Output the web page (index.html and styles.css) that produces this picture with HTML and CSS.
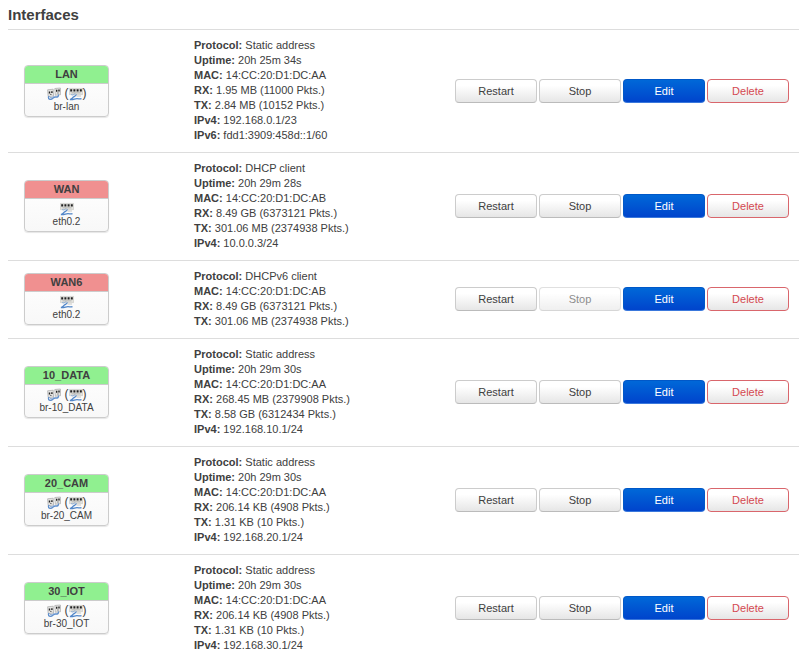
FILE: index.html
```
<!DOCTYPE html>
<html lang="en">
<head>
    <meta charset="UTF-8">
    <meta name="viewport" content="width=device-width, initial-scale=1.0">
    <title>Interfaces</title>
    <link rel="stylesheet" href="styles.css">
</head>
<body>
    <!-- shared icons -->
    <svg class="sprite" aria-hidden="true">
        <symbol id="bridge" viewBox="0 0 14 14">
            <path d="M.6 2.800l5.600-.6.4 6.800-5.400.7z" fill="#e4e4e2" stroke="#a9a9a9" stroke-width=".7"/>
            <path d="M7.800 1.500l5.600-.5.300 6.600-5.400.7z" fill="#e4e4e2" stroke="#a9a9a9" stroke-width=".7"/>
            <path d="M1.800 4.600h1.400v1.900H1.800zM4.200 4.300h1.400v1.800H4.200zM9 2.800h1.400v1.900H9zM11.300 2.500h1.400v1.900h-1.400z" fill="#222"/>
            <path d="M3 7h1.600v1H3zM10.200 5.500h1.500v1h-1.500z" fill="#777"/>
            <path d="M2 9C.8 11 1.800 12.800 4 12.200S6.500 9.800 8.500 10 12 9.500 11.300 7.500" fill="none" stroke="#5f8fcc" stroke-width="1.400"/>
            <path d="M3 10.500c1.500.4 2.800 0 4-1.200" fill="none" stroke="#8eaed8" stroke-width="1"/>
        </symbol>
        <symbol id="switch" viewBox="0 0 14 14">
            <path d="M.4 1.400h13.200v6.200H.4z" fill="#e2e2de" stroke="#bcbcb8" stroke-width=".5"/>
            <path d="M1.200 2.200h2v2.200h-2zM4.400 2.200h2v2.200h-2zM7.600 2.200h2v2.200h-2zM10.800 2.200h2v2.200h-2z" fill="#222"/>
            <path d="M2.500 5.400h9v.9h-9z" fill="#a8a8a4"/>
            <path d="M2.200 7.600c1.500.8 3.300-.2 3.800-1.200" fill="none" stroke="#86a9d6" stroke-width="1"/>
            <path d="M7.500 7.500C6.500 9.500 4.500 9.600 3.500 10.800S1.500 12.400 1 12.500c2.500.6 5-.8 7-.8s3 .4 4.500 0" fill="none" stroke="#5287c9" stroke-width="1.300"/>
            <path d="M7.500 9h4.500" stroke="#c8c8c4" stroke-width="1"/>
        </symbol>
    </svg>

    <h3>Interfaces</h3>

    <table class="interfaces">
        <tr>
            <td class="name">
                <div class="ifacebox">
                    <div class="head up">LAN</div>
                    <div class="body">
                        <div class="icons"><svg><use href="#bridge"/></svg> <span>(<svg><use href="#switch"/></svg>)</span></div>
                        br-lan
                    </div>
                </div>
            </td>
            <td class="info">
                <strong>Protocol:</strong> Static address<br>
                <strong>Uptime:</strong> 20h 25m 34s<br>
                <strong>MAC:</strong> 14:CC:20:D1:DC:AA<br>
                <strong>RX:</strong> 1.95 MB (11000 Pkts.)<br>
                <strong>TX:</strong> 2.84 MB (10152 Pkts.)<br>
                <strong>IPv4:</strong> 192.168.0.1/23<br>
                <strong>IPv6:</strong> fdd1:3909:458d::1/60
            </td>
            <td>
                <div class="actions">
                    <button type="button">Restart</button>
                    <button type="button">Stop</button>
                    <button type="button" class="edit">Edit</button>
                    <button type="button" class="delete">Delete</button>
                </div>
            </td>
        </tr>
        <tr>
            <td class="name">
                <div class="ifacebox">
                    <div class="head down">WAN</div>
                    <div class="body">
                        <div class="icons"><svg><use href="#switch"/></svg></div>
                        eth0.2
                    </div>
                </div>
            </td>
            <td class="info">
                <strong>Protocol:</strong> DHCP client<br>
                <strong>Uptime:</strong> 20h 29m 28s<br>
                <strong>MAC:</strong> 14:CC:20:D1:DC:AB<br>
                <strong>RX:</strong> 8.49 GB (6373121 Pkts.)<br>
                <strong>TX:</strong> 301.06 MB (2374938 Pkts.)<br>
                <strong>IPv4:</strong> 10.0.0.3/24
            </td>
            <td>
                <div class="actions">
                    <button type="button">Restart</button>
                    <button type="button">Stop</button>
                    <button type="button" class="edit">Edit</button>
                    <button type="button" class="delete">Delete</button>
                </div>
            </td>
        </tr>
        <tr>
            <td class="name">
                <div class="ifacebox">
                    <div class="head down">WAN6</div>
                    <div class="body">
                        <div class="icons"><svg><use href="#switch"/></svg></div>
                        eth0.2
                    </div>
                </div>
            </td>
            <td class="info">
                <strong>Protocol:</strong> DHCPv6 client<br>
                <strong>MAC:</strong> 14:CC:20:D1:DC:AB<br>
                <strong>RX:</strong> 8.49 GB (6373121 Pkts.)<br>
                <strong>TX:</strong> 301.06 MB (2374938 Pkts.)
            </td>
            <td>
                <div class="actions">
                    <button type="button">Restart</button>
                    <button type="button" disabled>Stop</button>
                    <button type="button" class="edit">Edit</button>
                    <button type="button" class="delete">Delete</button>
                </div>
            </td>
        </tr>
        <tr>
            <td class="name">
                <div class="ifacebox">
                    <div class="head up">10_DATA</div>
                    <div class="body">
                        <div class="icons"><svg><use href="#bridge"/></svg> <span>(<svg><use href="#switch"/></svg>)</span></div>
                        br-10_DATA
                    </div>
                </div>
            </td>
            <td class="info">
                <strong>Protocol:</strong> Static address<br>
                <strong>Uptime:</strong> 20h 29m 30s<br>
                <strong>MAC:</strong> 14:CC:20:D1:DC:AA<br>
                <strong>RX:</strong> 268.45 MB (2379908 Pkts.)<br>
                <strong>TX:</strong> 8.58 GB (6312434 Pkts.)<br>
                <strong>IPv4:</strong> 192.168.10.1/24
            </td>
            <td>
                <div class="actions">
                    <button type="button">Restart</button>
                    <button type="button">Stop</button>
                    <button type="button" class="edit">Edit</button>
                    <button type="button" class="delete">Delete</button>
                </div>
            </td>
        </tr>
        <tr>
            <td class="name">
                <div class="ifacebox">
                    <div class="head up">20_CAM</div>
                    <div class="body">
                        <div class="icons"><svg><use href="#bridge"/></svg> <span>(<svg><use href="#switch"/></svg>)</span></div>
                        br-20_CAM
                    </div>
                </div>
            </td>
            <td class="info">
                <strong>Protocol:</strong> Static address<br>
                <strong>Uptime:</strong> 20h 29m 30s<br>
                <strong>MAC:</strong> 14:CC:20:D1:DC:AA<br>
                <strong>RX:</strong> 206.14 KB (4908 Pkts.)<br>
                <strong>TX:</strong> 1.31 KB (10 Pkts.)<br>
                <strong>IPv4:</strong> 192.168.20.1/24
            </td>
            <td>
                <div class="actions">
                    <button type="button">Restart</button>
                    <button type="button">Stop</button>
                    <button type="button" class="edit">Edit</button>
                    <button type="button" class="delete">Delete</button>
                </div>
            </td>
        </tr>
        <tr>
            <td class="name">
                <div class="ifacebox">
                    <div class="head up">30_IOT</div>
                    <div class="body">
                        <div class="icons"><svg><use href="#bridge"/></svg> <span>(<svg><use href="#switch"/></svg>)</span></div>
                        br-30_IOT
                    </div>
                </div>
            </td>
            <td class="info">
                <strong>Protocol:</strong> Static address<br>
                <strong>Uptime:</strong> 20h 29m 30s<br>
                <strong>MAC:</strong> 14:CC:20:D1:DC:AA<br>
                <strong>RX:</strong> 206.14 KB (4908 Pkts.)<br>
                <strong>TX:</strong> 1.31 KB (10 Pkts.)<br>
                <strong>IPv4:</strong> 192.168.30.1/24
            </td>
            <td>
                <div class="actions">
                    <button type="button">Restart</button>
                    <button type="button">Stop</button>
                    <button type="button" class="edit">Edit</button>
                    <button type="button" class="delete">Delete</button>
                </div>
            </td>
        </tr>
    </table>
</body>
</html>
```
FILE: styles.css
```
body {
    font-family: "Liberation Sans", Arial, sans-serif;
    font-size: 11px;
    line-height: 15px;
    color: #404040;
    background-color: white;
    margin: 0;
    padding: 0 1px 0 8px;
}
.sprite {
    display: none;
}
h3 {
    font-size: 15px;
    line-height: 29px;
    margin: 0;
}
.interfaces {
    width: 100%;
    border-collapse: separate;
    border-spacing: 0;
}
.interfaces td {
    padding: 8px 10px 9px;
    border-top: 1px solid #ddd;
    vertical-align: middle;
}
.interfaces td.name {
    width: 150px;
    padding-left: 16px;
}
.info {
    white-space: nowrap;
}
.ifacebox {
    width: 85px;
    box-sizing: border-box;
    border: 1px solid #ccc;
    border-radius: 4px;
    overflow: hidden;
    text-align: center;
    background: linear-gradient(#fff, #f8f8f8);
    box-shadow: 0 1px 1px rgba(0, 0, 0, 0.1);
}
.head {
    font-weight: bold;
    line-height: 17px;
    border-bottom: 1px solid #ccc;
}
.up {
    background-color: #90f090;
}
.down {
    background-color: #f09090;
}
.body {
    padding: 3px 0;
    line-height: 13px;
    font-size: 10px;
}
.icons {
    height: 13px;
    display: flex;
    justify-content: center;
    gap: 4px;
    font-size: 12px;
}
.icons span {
    display: flex;
}
.icons svg {
    width: 14px;
    height: 14px;
}
.actions {
    display: flex;
    justify-content: flex-end;
    gap: 2px;
}
button {
    width: 82px;
    height: 24px;
    padding: 0;
    font-family: inherit;
    font-size: 11px;
    color: #404040;
    background: linear-gradient(#fff, #fff 25%, #e6e6e6);
    border: 1px solid #ccc;
    border-bottom-color: #bbb;
    border-radius: 4px;
    cursor: pointer;
}
button:disabled {
    opacity: 0.6;
    cursor: default;
}
.edit {
    color: white;
    background: linear-gradient(#0068d8, #0044cc);
    border-color: #0058c8;
    border-bottom-color: #3a78dc;
}
.delete {
    color: #d44950;
    border-color: #d9666c;
}
```
